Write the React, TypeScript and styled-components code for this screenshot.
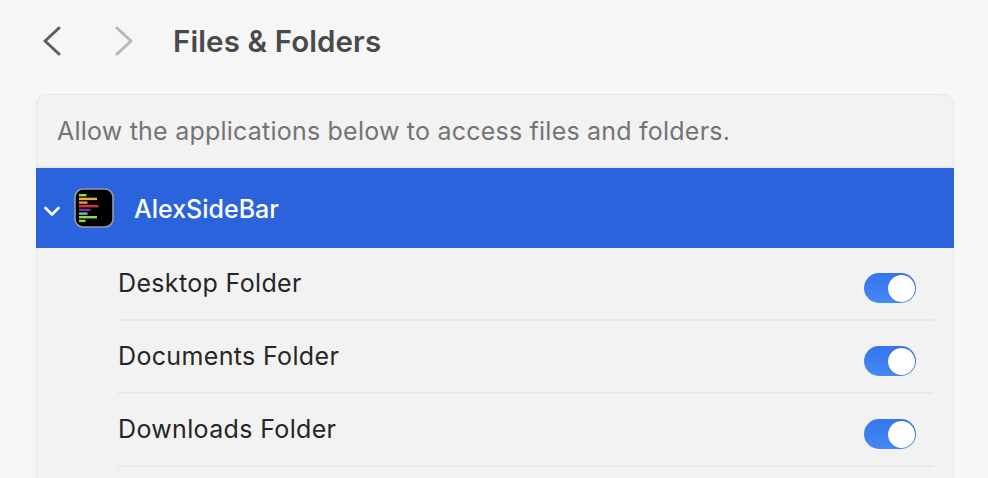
import React from 'react'
import styled, { createGlobalStyle } from 'styled-components'

const GlobalStyle = createGlobalStyle`
  html, body {
    margin: 0;
    padding: 0;
    height: 100%;
    overflow: hidden;
    background: #f6f6f6;
  }
  body {
    font-family: Inter, "Noto Sans", sans-serif;
    -webkit-font-smoothing: antialiased;
  }
`

const Page = styled.div`
  width: 988px;
  height: 478px;
  overflow: hidden;
  padding: 0 34px 0 36px;
  box-sizing: border-box;
`

const Toolbar = styled.div`
  height: 94px;
  display: flex;
  align-items: flex-start;
  padding-top: 22px;
  box-sizing: border-box;
`

const NavButton = styled.svg`
  width: 20px;
  height: 38px;
  flex: none;
  margin-left: ${(props) => props.$offset}px;
  fill: none;
  stroke: ${(props) => props.$color};
  stroke-width: 3;
  stroke-linecap: round;
  stroke-linejoin: round;
`

const Title = styled.h1`
  margin: 0 0 0 39px;
  font-size: 29.5px;
  line-height: 38px;
  font-weight: 600;
  letter-spacing: 0.1px;
  color: #4a4a4a;
`

const Panel = styled.div`
  height: 420px;
  border: 1px solid #e8e8e8;
  border-bottom: none;
  border-radius: 11px 11px 0 0;
  background: #f2f2f2;
`

const Hint = styled.div`
  height: 73px;
  padding: 21px 20px 0;
  box-sizing: border-box;
  border-bottom: 2px solid #e9e9e9;
  font-size: 25px;
  line-height: 30px;
  letter-spacing: 0.22px;
  color: #747474;
`

const AppRow = styled.div`
  height: 80px;
  margin: 0 -1px;
  display: flex;
  align-items: center;
  background: #2a63dc;
  color: #fff;
`

const Chevron = styled.svg`
  width: 18px;
  height: 12px;
  margin: 5px 0 0 7px;
  flex: none;
  fill: none;
  stroke: #fff;
  stroke-width: 2.6;
  stroke-linecap: round;
  stroke-linejoin: round;
`

const AppIcon = styled.svg`
  width: 40px;
  height: 40px;
  margin-left: 13px;
  flex: none;
`

const AppName = styled.span`
  margin: 2px 0 0 20px;
  font-size: 25px;
  line-height: 30px;
  font-weight: 500;
`

const FolderList = styled.div`
  padding-left: 81px;
  padding-right: 19px;
`

const FolderRow = styled.div`
  height: 73px;
  box-sizing: border-box;
  border-bottom: 2px solid #e8e8e8;
  display: flex;
  justify-content: space-between;
  padding: 20px 18px 0 0;
`

const FolderName = styled.span`
  font-size: 25px;
  line-height: 30px;
  letter-spacing: 0.35px;
  color: #262626;
`

const Toggle = styled.div`
  width: 52px;
  height: 30px;
  margin-top: 5px;
  border-radius: 15px;
  padding: 1.5px;
  box-sizing: border-box;
  display: flex;
  justify-content: flex-end;
  background: linear-gradient(180deg, #3576ef 0%, #4488f2 100%);
`

const Knob = styled.div`
  width: 27px;
  height: 27px;
  border-radius: 50%;
  background: #fff;
  box-shadow: 0 0 1px rgba(0, 0, 0, 0.35);
`

const bars = [
  { y: 6, w: 7.5, color: '#93d84a' },
  { y: 9.7, w: 18, color: '#edb040' },
  { y: 13.4, w: 8.5, color: '#e6983c' },
  { y: 17, w: 19.5, color: '#d0323e' },
  { y: 20.7, w: 11.5, color: '#822c98' },
  { y: 24.4, w: 8.5, color: '#5cc0d8' },
  { y: 28, w: 18, color: '#93d84a' },
  { y: 31.7, w: 6.5, color: '#93d84a' },
]

const folders = ['Desktop Folder', 'Documents Folder', 'Downloads Folder']

const App = () => {
  return (
    <Page>
      <GlobalStyle />
      <Toolbar>
        <NavButton $offset={6} $color='#5e5e5e' viewBox='0 0 20 38'>
          <path d='M17 6 L3 19 L17 32' />
        </NavButton>
        <NavButton $offset={52} $color='#b8b8b8' viewBox='0 0 20 38'>
          <path d='M3 6 L17 19 L3 32' />
        </NavButton>
        <Title>Files &amp; Folders</Title>
      </Toolbar>
      <Panel>
        <Hint>Allow the applications below to access files and folders.</Hint>
        <AppRow>
          <Chevron viewBox='0 0 18 12'>
            <path d='M2.5 3 L9 9.5 L15.5 3' />
          </Chevron>
          <AppIcon viewBox='0 0 40 40'>
            <rect x='1' y='1' width='38' height='38' rx='8' fill='#000' stroke='#9a9aa2' strokeWidth='1.6' />
            {bars.map((bar) => (
              <rect key={bar.y} x='5' y={bar.y} width={bar.w} height='2.4' fill={bar.color} />
            ))}
          </AppIcon>
          <AppName>AlexSideBar</AppName>
        </AppRow>
        <FolderList>
          {folders.map((name) => (
            <FolderRow key={name}>
              <FolderName>{name}</FolderName>
              <Toggle>
                <Knob />
              </Toggle>
            </FolderRow>
          ))}
        </FolderList>
      </Panel>
    </Page>
  )
}

export default App
